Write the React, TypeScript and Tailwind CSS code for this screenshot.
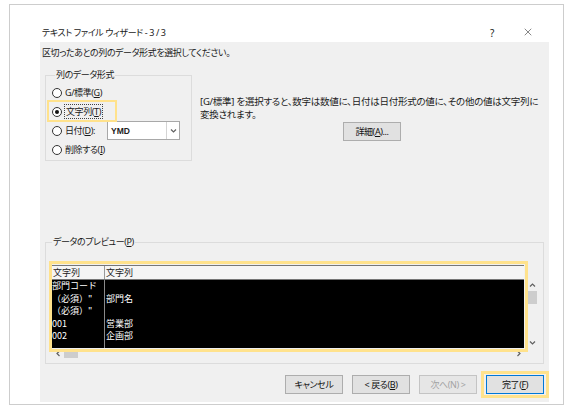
import { X } from 'lucide-react'
import type { ReactNode } from 'react'

const jp = "font-['Noto_Sans','Noto_Sans_CJK_JP',sans-serif]"

// underlined access key, e.g. (G)
function Key({ k }: { k: string }) {
	return <span className="underline underline-offset-[1px]">{k}</span>
}

function Radio({ checked = false, children }: { checked?: boolean, children: ReactNode }) {
	return <span className="flex items-center gap-[3px]">
		<span className="w-[10px] h-[10px] rounded-full border border-[#333] bg-white flex items-center justify-center">
			{checked ? <span className="w-[4px] h-[4px] rounded-full bg-[#111]" /> : null}
		</span>
		<span>{children}</span>
	</span>
}

function Chevron({ dir }: { dir: 'up' | 'down' | 'left' | 'right' }) {
	const paths = {
		up: 'M1 4.5 L3.5 2 L6 4.5',
		down: 'M1 2.5 L3.5 5 L6 2.5',
		left: 'M4.5 1 L2 3.5 L4.5 6',
		right: 'M2.5 1 L5 3.5 L2.5 6',
	}
	return <svg width="7" height="7" viewBox="0 0 7 7">
		<path d={paths[dir]} fill="none" stroke="#606060" strokeWidth="1.2" />
	</svg>
}

function Button({ children, disabled = false, primary = false }: { children: ReactNode, disabled?: boolean, primary?: boolean }) {
	return <button className={
		primary
		? "w-[58px] h-[19px] bg-[#e1e1e1] border border-[#0078d7] text-[#111] flex items-center justify-center"
		: disabled
		? "w-[58px] h-[19px] bg-[#e6e6e6] border border-[#c4c4c4] text-[#a3a3a3] flex items-center justify-center"
		: "w-[58px] h-[19px] bg-[#e1e1e1] border border-[#adadad] text-[#111] flex items-center justify-center"
	}>
		<span>{children}</span>
	</button>
}

const rows: [string, string][] = [
	['部門コード', ''],
	['（必須）"', '部門名'],
	['（必須）"', ''],
	['001', '営業部'],
	['002', '企画部'],
]

export default function App() {
	return <div className={`w-[570px] h-[411px] bg-white pt-[4px] pl-[9px] ${jp} text-[9px] leading-[12px] tracking-[-0.4px] text-[#1a1a1a] [font-feature-settings:'palt']`}>
		<div className="w-[555px] h-[401px] border border-[#cdcdcd] flex flex-col">
			{/* title bar */}
			<div className="h-[37px] flex items-end pb-[3px] pl-[32px] pr-[29px]">
				<span className="flex-1">テキスト ファイル ウィザード - 3 / 3</span>
				<span className="text-[10px] mr-[28px]">?</span>
				<X size={12} strokeWidth={1.1} className="text-[#222] mb-[1px]" />
			</div>

			<div className="ml-[30px] mr-[14px] h-[360px] bg-[#f0f0f0] flex flex-col">
				<p className="pl-[2px] pt-[5px]">区切ったあとの列のデータ形式を選択してください。</p>

				<div className="flex mt-[10px] mx-[5px]">
					<fieldset className="w-[147px] h-[92px] border border-[#dcdcdc] pl-[6px] pt-[2px]">
						<legend className="ml-[3px] px-[1px]">列のデータ形式</legend>
						<div className="h-[19px] flex items-center">
							<Radio>G/標準(<Key k="G" />)</Radio>
						</div>
						<div className="h-[19px] flex items-center relative">
							<Radio checked>
								<span className="outline outline-1 outline-dotted outline-[#444] px-[1px] leading-[13px]">文字列(<Key k="T" />)</span>
							</Radio>
							<span className="absolute left-[-5px] top-[-2px] w-[70px] h-[22px] border-2 border-[#ffe28c]" />
						</div>
						<div className="h-[19px] flex items-center">
							<Radio>日付(<Key k="D" />):</Radio>
							<div className="ml-[12px] w-[73px] h-[19px] bg-white border border-[#a8a8a8] flex items-center">
								<span className="flex-1 pl-[3px] font-['Liberation_Sans',sans-serif] font-bold text-[8.5px] tracking-normal text-[#222]">YMD</span>
								<span className="w-[13px] h-full border-l border-[#d4d4d4] flex items-center justify-center">
									<Chevron dir="down" />
								</span>
							</div>
						</div>
						<div className="h-[19px] flex items-center">
							<Radio>削除する(<Key k="I" />)</Radio>
						</div>
					</fieldset>

					<div className="flex-1 ml-[8px] pt-[26px] flex flex-col">
						<p className="leading-[13px] text-[9.5px] tracking-[-0.25px] whitespace-nowrap">[G/標準] を選択すると、数字は数値に、日付は日付形式の値に、その他の値は文字列に<br />変換されます。</p>
						<div className="flex justify-center mt-[1px]">
							<Button>詳細(<Key k="A" />)...</Button>
						</div>
					</div>
				</div>

				<fieldset className="mt-[75px] mx-[5px] h-[128px] border border-[#dcdcdc] pl-[3px]">
					<legend className="ml-[3px] px-[1px]">データのプレビュー(<Key k="P" />)</legend>
					<div className="relative mt-[13px] w-[490px] h-[98px] flex flex-col">
						<div className="flex flex-1">
							<div className="ml-[3px] mt-[4px] w-[472px] flex flex-col font-['Noto_Sans_CJK_JP',sans-serif] tracking-normal [font-feature-settings:normal]">
								<div className="h-[15px] bg-[#f5f5f5] border-y border-[#777] flex text-[9px] leading-[13px] text-[#222]">
									<span className="w-[53px] border-r border-[#999] pl-[1px]">文字列</span>
									<span className="pl-[1px]">文字列</span>
								</div>
								<div className="flex-1 bg-black text-white text-[9px] leading-[12.5px] flex">
									<div className="w-[53px] border-r border-[#8a8a8a]">
										{rows.map((r, i) => <p key={i} className="whitespace-pre">{r[0]}</p>)}
									</div>
									<div className="pl-[1px]">
										{rows.map((r, i) => <p key={i} className="whitespace-pre h-[12.5px]">{r[1]}</p>)}
									</div>
								</div>
							</div>
							<div className="ml-[2px] w-[12px] mt-[18px] flex flex-col items-center">
								<div className="h-[12px] flex items-center"><Chevron dir="up" /></div>
								<div className="w-[10px] h-[13px] bg-[#cdcdcd]" />
								<div className="flex-1" />
								<div className="h-[12px] flex items-center"><Chevron dir="down" /></div>
							</div>
						</div>
						<div className="h-[11px] ml-[3px] w-[472px] flex items-center">
							<div className="w-[12px] flex justify-center"><Chevron dir="left" /></div>
							<div className="w-[14px] h-[9px] bg-[#cdcdcd]" />
							<div className="flex-1" />
							<div className="w-[12px] flex justify-center"><Chevron dir="right" /></div>
						</div>
						<span className="absolute left-0 top-0 w-[479px] h-[91px] border-[3px] border-[#ffe28c]" />
					</div>
				</fieldset>

				<div className="mt-[11px] pr-[5px] flex justify-end gap-[9px]">
					<Button>キャンセル</Button>
					<Button>&lt; 戻る(<Key k="B" />)</Button>
					<Button disabled>次へ(N) &gt;</Button>
					<div className="relative">
						<Button primary>完了(<Key k="F" />)</Button>
						<span className="absolute -left-[5px] -right-[5px] -top-[4px] -bottom-[4px] border-[3px] border-[#ffe28c]" />
					</div>
				</div>
			</div>
		</div>
	</div>
}
